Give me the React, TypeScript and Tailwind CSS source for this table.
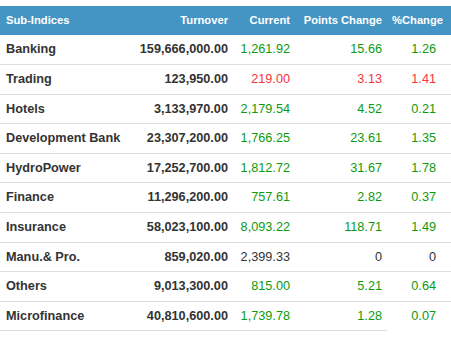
import React from "react";

type Row = { name: string; turnover: string; current: string; points: string; pct: string; dir: "up" | "down" | "flat" };

const rows: Row[] = [
  { name: "Banking", turnover: "159,666,000.00", current: "1,261.92", points: "15.66", pct: "1.26", dir: "up" },
  { name: "Trading", turnover: "123,950.00", current: "219.00", points: "3.13", pct: "1.41", dir: "down" },
  { name: "Hotels", turnover: "3,133,970.00", current: "2,179.54", points: "4.52", pct: "0.21", dir: "up" },
  { name: "Development Bank", turnover: "23,307,200.00", current: "1,766.25", points: "23.61", pct: "1.35", dir: "up" },
  { name: "HydroPower", turnover: "17,252,700.00", current: "1,812.72", points: "31.67", pct: "1.78", dir: "up" },
  { name: "Finance", turnover: "11,296,200.00", current: "757.61", points: "2.82", pct: "0.37", dir: "up" },
  { name: "Insurance", turnover: "58,023,100.00", current: "8,093.22", points: "118.71", pct: "1.49", dir: "up" },
  { name: "Manu.& Pro.", turnover: "859,020.00", current: "2,399.33", points: "0", pct: "0", dir: "flat" },
  { name: "Others", turnover: "9,013,300.00", current: "815.00", points: "5.21", pct: "0.64", dir: "up" },
  { name: "Microfinance", turnover: "40,810,600.00", current: "1,739.78", points: "1.28", pct: "0.07", dir: "up" },
];

function colorFor(dir: Row["dir"]) {
  if (dir === "up") return "text-[#0e9a0e]";
  if (dir === "down") return "text-[#f5333a]";
  return "text-[#333333]";
}

export default function App() {
  return (
    <div className="w-[451px] h-[346px] bg-white pt-[6px]" style={{ fontFamily: '"Liberation Sans", Arial, sans-serif' }}>
      <table className="w-[451px] border-collapse table-fixed">
        <colgroup>
          <col className="w-[120px]" />
          <col className="w-[113px]" />
          <col className="w-[62px]" />
          <col className="w-[92px]" />
          <col className="w-[64px]" />
        </colgroup>
        <thead>
          <tr className="bg-[#4595c4] text-white text-[11.2px] font-bold h-[29px]">
            <th className="text-left pl-[6px] p-0 font-bold">Sub-Indices</th>
            <th className="text-right pr-[5px] p-0 font-bold">Turnover</th>
            <th className="text-right pr-[5px] p-0 font-bold">Current</th>
            <th className="text-right pr-[5px] p-0 font-bold whitespace-nowrap">Points Change</th>
            <th className="text-right pr-[8px] p-0 font-bold">%Change</th>
          </tr>
        </thead>
        <tbody className="text-[12.7px] leading-[18.6px]">
          {rows.map((r, i) => {
            const last = i === rows.length - 1;
            const c = colorFor(r.dir);
            return (
              <tr key={r.name} className="h-[29.6px]">
                <td className="border-b border-[#dddddd] pl-[6px] py-[5px] font-bold text-[#333333] whitespace-nowrap">{r.name}</td>
                <td className="border-b border-[#dddddd] pr-[5px] py-[5px] text-right font-bold text-[#333333] whitespace-nowrap">{r.turnover}</td>
                <td className={`border-b border-[#dddddd] pr-[5px] py-[5px] text-right whitespace-nowrap ${c}`}>{r.current}</td>
                <td className={`border-b border-[#dddddd] pr-[5px] py-[5px] text-right whitespace-nowrap ${c}`}>{r.points}</td>
                <td className={`border-b ${last ? "border-transparent" : "border-[#dddddd]"} pr-[15px] py-[5px] text-right whitespace-nowrap ${c}`}>{r.pct}</td>
              </tr>
            );
          })}
        </tbody>
      </table>
    </div>
  );
}
